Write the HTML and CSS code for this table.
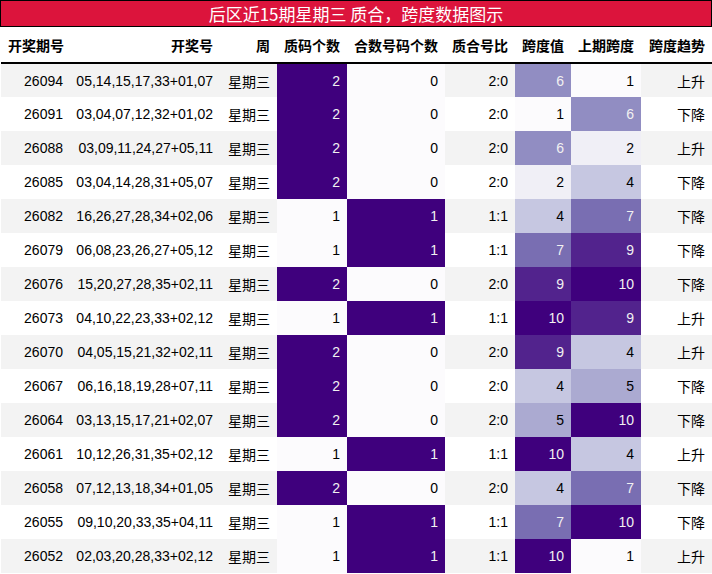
FILE: index.html
```html
<!DOCTYPE html>
<html lang="zh">
<head>
<meta charset="utf-8">
<link rel="stylesheet" href="styles.css">
</head>
<body>
<div class="page">
  <div class="title">后区近15期星期三 质合，跨度数据图示</div>
  <table class="grid">
    <colgroup>
      <col class="c1"><col class="c2"><col class="c3"><col class="c4"><col class="c5"><col class="c6"><col class="c7"><col class="c8"><col class="c9">
    </colgroup>
    <thead>
      <tr><th class="first">开奖期号</th><th>开奖号</th><th>周</th><th>质码个数</th><th>合数号码个数</th><th>质合号比</th><th>跨度值</th><th>上期跨度</th><th>跨度趋势</th></tr>
    </thead>
    <tbody>
      <tr><td>26094</td><td>05,14,15,17,33+01,07</td><td>星期三</td><td class="hi">2</td><td class="lo">0</td><td>2:0</td><td class="s6">6</td><td class="s1">1</td><td>上升</td></tr>
      <tr><td>26091</td><td>03,04,07,12,32+01,02</td><td>星期三</td><td class="hi">2</td><td class="lo">0</td><td>2:0</td><td class="s1">1</td><td class="s6">6</td><td>下降</td></tr>
      <tr><td>26088</td><td>03,09,11,24,27+05,11</td><td>星期三</td><td class="hi">2</td><td class="lo">0</td><td>2:0</td><td class="s6">6</td><td class="s2">2</td><td>上升</td></tr>
      <tr><td>26085</td><td>03,04,14,28,31+05,07</td><td>星期三</td><td class="hi">2</td><td class="lo">0</td><td>2:0</td><td class="s2">2</td><td class="s4">4</td><td>下降</td></tr>
      <tr><td>26082</td><td>16,26,27,28,34+02,06</td><td>星期三</td><td class="lo">1</td><td class="hi">1</td><td>1:1</td><td class="s4">4</td><td class="s7">7</td><td>下降</td></tr>
      <tr><td>26079</td><td>06,08,23,26,27+05,12</td><td>星期三</td><td class="lo">1</td><td class="hi">1</td><td>1:1</td><td class="s7">7</td><td class="s9">9</td><td>下降</td></tr>
      <tr><td>26076</td><td>15,20,27,28,35+02,11</td><td>星期三</td><td class="hi">2</td><td class="lo">0</td><td>2:0</td><td class="s9">9</td><td class="s10">10</td><td>下降</td></tr>
      <tr><td>26073</td><td>04,10,22,23,33+02,12</td><td>星期三</td><td class="lo">1</td><td class="hi">1</td><td>1:1</td><td class="s10">10</td><td class="s9">9</td><td>上升</td></tr>
      <tr><td>26070</td><td>04,05,15,21,32+02,11</td><td>星期三</td><td class="hi">2</td><td class="lo">0</td><td>2:0</td><td class="s9">9</td><td class="s4">4</td><td>上升</td></tr>
      <tr><td>26067</td><td>06,16,18,19,28+07,11</td><td>星期三</td><td class="hi">2</td><td class="lo">0</td><td>2:0</td><td class="s4">4</td><td class="s5">5</td><td>下降</td></tr>
      <tr><td>26064</td><td>03,13,15,17,21+02,07</td><td>星期三</td><td class="hi">2</td><td class="lo">0</td><td>2:0</td><td class="s5">5</td><td class="s10">10</td><td>下降</td></tr>
      <tr><td>26061</td><td>10,12,26,31,35+02,12</td><td>星期三</td><td class="lo">1</td><td class="hi">1</td><td>1:1</td><td class="s10">10</td><td class="s4">4</td><td>上升</td></tr>
      <tr><td>26058</td><td>07,12,13,18,34+01,05</td><td>星期三</td><td class="hi">2</td><td class="lo">0</td><td>2:0</td><td class="s4">4</td><td class="s7">7</td><td>下降</td></tr>
      <tr><td>26055</td><td>09,10,20,33,35+04,11</td><td>星期三</td><td class="lo">1</td><td class="hi">1</td><td>1:1</td><td class="s7">7</td><td class="s10">10</td><td>下降</td></tr>
      <tr><td>26052</td><td>02,03,20,28,33+02,12</td><td>星期三</td><td class="lo">1</td><td class="hi">1</td><td>1:1</td><td class="s10">10</td><td class="s1">1</td><td>上升</td></tr>
    </tbody>
  </table>
</div>
</body>
</html>
```

FILE: styles.css
```css
html, body {
  margin: 0;
  padding: 0;
  background: #ffffff;
}

.page {
  width: 712px;
  font-family: "Liberation Sans", "Noto Sans CJK SC", sans-serif;
  color: #000000;
}

.title {
  box-sizing: border-box;
  width: 712px;
  height: 27px;
  border: 1px solid #000000;
  background: #dc143c;
  color: #ffffff;
  font-family: "Noto Sans CJK SC", sans-serif;
  font-size: 17px;
  line-height: 25px;
  text-align: center;
}

.grid {
  margin-left: 1px;
  width: 711px;
  border-collapse: collapse;
  table-layout: fixed;
  font-size: 14px;
}

.c1 { width: 69px; }
.c2 { width: 150px; }
.c3 { width: 57px; }
.c4 { width: 70px; }
.c5 { width: 98px; }
.c6 { width: 70px; }
.c7 { width: 56px; }
.c8 { width: 70px; }
.c9 { width: 71px; }

.grid th {
  height: 36px;
  padding: 0 7px 0 0;
  box-sizing: border-box;
  border-bottom: 2px solid #000000;
  font-family: "Liberation Sans", "Noto Sans CJK SC", sans-serif;
  font-weight: bold;
  text-align: right;
  vertical-align: middle;
  white-space: nowrap;
}

.grid th.first {
  text-align: left;
  padding-left: 7px;
}

.grid td {
  height: 34px;
  padding: 0 7px 0 0;
  box-sizing: border-box;
  text-align: right;
  vertical-align: middle;
  white-space: nowrap;
}

.grid tbody tr:nth-child(odd) td { background: #f3f3f3; }
.grid tbody tr:nth-child(even) td { background: #ffffff; }

.grid tbody tr td.hi { background: #3f007d; color: #f1f1f1; }
.grid tbody tr td.lo { background: #fcfbfd; color: #000000; }

.grid tbody tr td.s1 { background: #fcfbfd; color: #000000; }
.grid tbody tr td.s2 { background: #f0eff6; color: #000000; }
.grid tbody tr td.s4 { background: #c6c7e1; color: #000000; }
.grid tbody tr td.s5 { background: #abaad1; color: #000000; }
.grid tbody tr td.s6 { background: #918dc2; color: #f1f1f1; }
.grid tbody tr td.s7 { background: #796eb2; color: #f1f1f1; }
.grid tbody tr td.s9 { background: #52238d; color: #f1f1f1; }
.grid tbody tr td.s10 { background: #3f007d; color: #f1f1f1; }
```
